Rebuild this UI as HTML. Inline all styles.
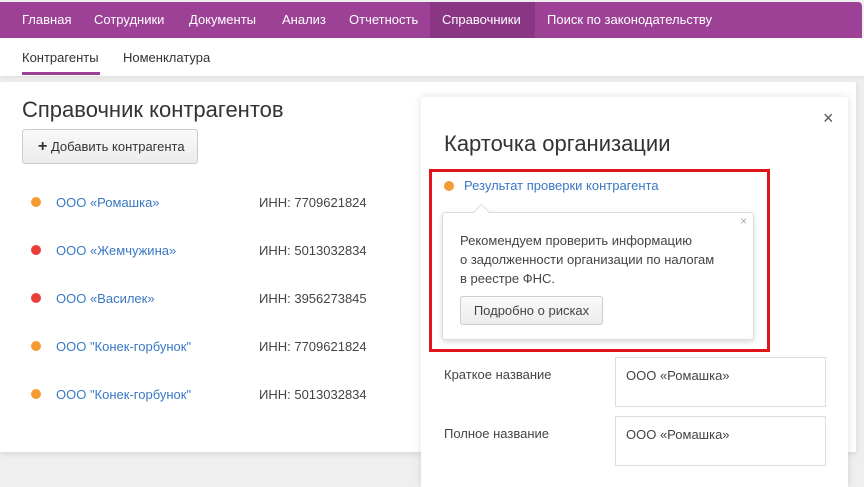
<!DOCTYPE html>
<html><head><meta charset="utf-8"><style>
*{box-sizing:border-box;margin:0;padding:0}
body{width:864px;height:476px;overflow:hidden;background:#efefef;font-family:"Liberation Sans",sans-serif;position:relative;color:#333}
.nav{position:absolute;left:0;top:2px;width:862px;height:36px;background:#9c4196;border-radius:0 4px 0 0}
.nav span{position:absolute;top:0;height:36px;line-height:36px;color:#fff;font-size:13px}
.nav .act{background:#8b3585;padding:0 12px}
.sub{position:absolute;left:0;top:38px;width:864px;height:38px;background:#fff;box-shadow:0 2px 4px rgba(0,0,0,.06)}
.sub span{position:absolute;top:12px;font-size:13px;color:#333}
.main{position:absolute;left:0;top:82px;width:856px;height:370px;background:#fff;box-shadow:0 2px 6px rgba(0,0,0,.1)}
.abs{position:absolute}
.dot{position:absolute;width:10px;height:10px;border-radius:50%}
.o{background:#f59b34}.r{background:#ea3e36}
.lnk{color:#3a78c3;font-size:13px;position:absolute}
.inn{font-size:13px;color:#444;position:absolute}
.modal{position:absolute;left:421px;top:97px;width:427px;height:390px;background:#fff;box-shadow:0 0 8px rgba(0,0,0,.12)}
.fld{position:absolute;border:1px solid #ddd;background:#fff;font-size:13px;padding:10px 10px;color:#444}
</style></head><body>
<div class="nav">
<span style="left:22px">Главная</span><span style="left:94px">Сотрудники</span><span style="left:189px">Документы</span><span style="left:282px">Анализ</span><span style="left:349px">Отчетность</span>
<span class="act" style="left:430px;width:105px">Справочники</span><span style="left:547px">Поиск по законодательству</span>
</div>
<div class="sub"><span style="left:22px">Контрагенты</span><div class="abs" style="left:22px;top:34px;width:78px;height:3px;background:#9c4196"></div><span style="left:123px">Номенклатура</span></div>
<div class="main"></div>
<div class="abs" style="left:22px;top:97px;font-size:22px;color:#333">Справочник контрагентов</div>
<div class="abs" style="left:22px;top:129px;width:176px;height:35px;border:1px solid #ccc;border-radius:3px;background:linear-gradient(#fafafa,#ececec);font-size:13px;line-height:33px;padding-left:15px"><b style="font-size:16px">+</b> Добавить контрагента</div>
<div class="dot o" style="left:31px;top:197px"></div><span class="lnk" style="left:56px;top:195px">ООО «Ромашка»</span><span class="inn" style="left:259px;top:195px">ИНН: 7709621824</span>
<div class="dot r" style="left:31px;top:245px"></div><span class="lnk" style="left:56px;top:243px">ООО «Жемчужина»</span><span class="inn" style="left:259px;top:243px">ИНН: 5013032834</span>
<div class="dot r" style="left:31px;top:293px"></div><span class="lnk" style="left:56px;top:291px">ООО «Василек»</span><span class="inn" style="left:259px;top:291px">ИНН: 3956273845</span>
<div class="dot o" style="left:31px;top:341px"></div><span class="lnk" style="left:56px;top:339px">ООО "Конек-горбунок"</span><span class="inn" style="left:259px;top:339px">ИНН: 7709621824</span>
<div class="dot o" style="left:31px;top:389px"></div><span class="lnk" style="left:56px;top:387px">ООО "Конек-горбунок"</span><span class="inn" style="left:259px;top:387px">ИНН: 5013032834</span>
<div class="modal"></div>
<div class="abs" style="left:823px;top:108px;font-size:18px;color:#555">×</div>
<div class="abs" style="left:444px;top:131px;font-size:22px;color:#333">Карточка организации</div>
<div class="abs" style="left:429px;top:169px;width:341px;height:183px;border:3px solid #e0141b"></div>
<div class="dot o" style="left:444px;top:181px"></div><span class="lnk" style="left:464px;top:178px">Результат проверки контрагента</span>
<div class="abs" style="left:442px;top:212px;width:312px;height:128px;background:#fff;border:1px solid #ddd;border-radius:3px;box-shadow:0 2px 6px rgba(0,0,0,.15)"></div>
<div class="abs" style="left:476px;top:206px;width:11px;height:11px;background:#fff;border-left:1px solid #ddd;border-top:1px solid #ddd;transform:rotate(45deg)"></div>
<div class="abs" style="left:740px;top:214px;font-size:12px;color:#aaa">×</div>
<div class="abs" style="left:460px;top:231px;font-size:13px;line-height:19px;color:#444">Рекомендуем проверить информацию<br>о задолженности организации по налогам<br>в реестре ФНС.</div>
<div class="abs" style="left:460px;top:296px;width:143px;height:29px;border:1px solid #ccc;border-radius:3px;background:linear-gradient(#fafafa,#ececec);font-size:13px;line-height:27px;text-align:center;color:#444">Подробно о рисках</div>
<span class="abs" style="left:444px;top:367px;font-size:13px;color:#444">Краткое название</span>
<div class="fld" style="left:615px;top:357px;width:211px;height:50px">ООО «Ромашка»</div>
<span class="abs" style="left:444px;top:426px;font-size:13px;color:#444">Полное название</span>
<div class="fld" style="left:615px;top:416px;width:211px;height:50px">ООО «Ромашка»</div>
</body></html>
